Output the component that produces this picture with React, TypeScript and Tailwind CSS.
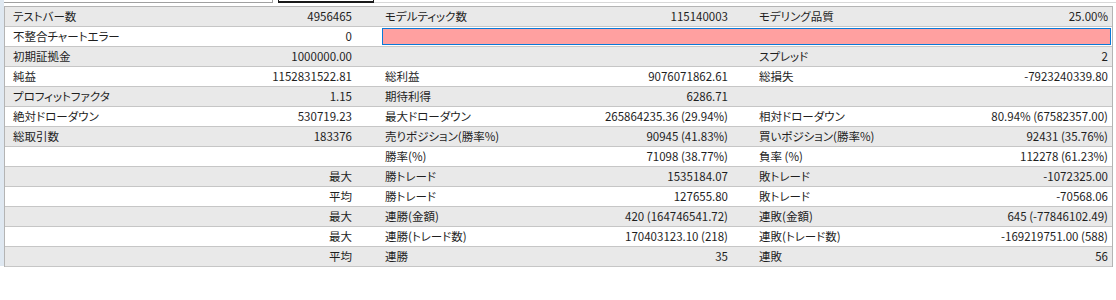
import React from "react";

type Cell = [string, string] | null;
type Row = { c1: Cell; c2: Cell | "pink" ; c3?: Cell };

const rows: Row[] = [
  { c1: ["テストバー数", "4956465"], c2: ["モデルティック数", "115140003"], c3: ["モデリング品質", "25.00%"] },
  { c1: ["不整合チャートエラー", "0"], c2: "pink" },
  { c1: ["初期証拠金", "1000000.00"], c2: null, c3: ["スプレッド", "2"] },
  { c1: ["純益", "1152831522.81"], c2: ["総利益", "9076071862.61"], c3: ["総損失", "-7923240339.80"] },
  { c1: ["プロフィットファクタ", "1.15"], c2: ["期待利得", "6286.71"], c3: null },
  { c1: ["絶対ドローダウン", "530719.23"], c2: ["最大ドローダウン", "265864235.36 (29.94%)"], c3: ["相対ドローダウン", "80.94% (67582357.00)"] },
  { c1: ["総取引数", "183376"], c2: ["売りポジション(勝率%)", "90945 (41.83%)"], c3: ["買いポジション(勝率%)", "92431 (35.76%)"] },
  { c1: null, c2: ["勝率(%)", "71098 (38.77%)"], c3: ["負率 (%)", "112278 (61.23%)"] },
  { c1: ["", "最大"], c2: ["勝トレード", "1535184.07"], c3: ["敗トレード", "-1072325.00"] },
  { c1: ["", "平均"], c2: ["勝トレード", "127655.80"], c3: ["敗トレード", "-70568.06"] },
  { c1: ["", "最大"], c2: ["連勝(金額)", "420 (164746541.72)"], c3: ["連敗(金額)", "645 (-77846102.49)"] },
  { c1: ["", "最大"], c2: ["連勝(トレード数)", "170403123.10 (218)"], c3: ["連敗(トレード数)", "-169219751.00 (588)"] },
  { c1: ["", "平均"], c2: ["連勝", "35"], c3: ["連敗", "56"] },
];

function CellView({ cell, cls }: { cell: Cell | undefined; cls: string }) {
  return (
    <div className={`flex items-center justify-between whitespace-nowrap ${cls}`}>
      <span>{cell ? cell[0] : ""}</span>
      <span>{cell ? cell[1] : ""}</span>
    </div>
  );
}

export default function App() {
  return (
    <div
      className="w-[1116px] h-[300px] bg-white text-[11.5px] text-[#1e1e1e] leading-none [font-feature-settings:'palt'] overflow-hidden"
      style={{ fontFamily: '"Noto Sans CJK JP", "Noto Sans", sans-serif' }}
    >
      <div className="flex h-[6px]">
        <div className="w-[4px] bg-[#dfe8f1]" />
        <div className="w-[269px] h-[3px] border-b border-r border-[#a0a0a0]" />
        <div className="w-[5px]" />
        <div className="w-[96px] h-[3px] border-b-2 border-l border-r border-[#1a1a1a]" />
        <div className="flex-1 h-[3px] border-b border-[#d8d8d8]" />
      </div>
      <div className="flex">
        <div className="w-[4px] h-[260px] bg-[#dfe8f1]" />
        <div className="w-[1109px] border-l border-r border-t border-[#b4b4b4]">
          {rows.map((r, i) => (
            <div
              key={i}
              className={`grid grid-cols-[367px_372px_368px] h-[20px] border-b border-[#c6c6c6] ${
                i % 2 === 0 ? "bg-[#e9e9e9]" : "bg-white"
              }`}
            >
              <CellView cell={r.c1} cls="pl-[8px] pr-[20px]" />
              {r.c2 === "pink" ? (
                <div className="col-span-2 flex items-center pl-[10px] pr-[1px]">
                  <div className="w-full h-[17px] bg-[#ffa0a0] border border-[#0a7ad8]" />
                </div>
              ) : (
                <>
                  <CellView cell={r.c2} cls="pl-[13px] pr-[16px]" />
                  <CellView cell={r.c3} cls="pl-[15px] pr-[4px]" />
                </>
              )}
            </div>
          ))}
        </div>
      </div>
    </div>
  );
}
